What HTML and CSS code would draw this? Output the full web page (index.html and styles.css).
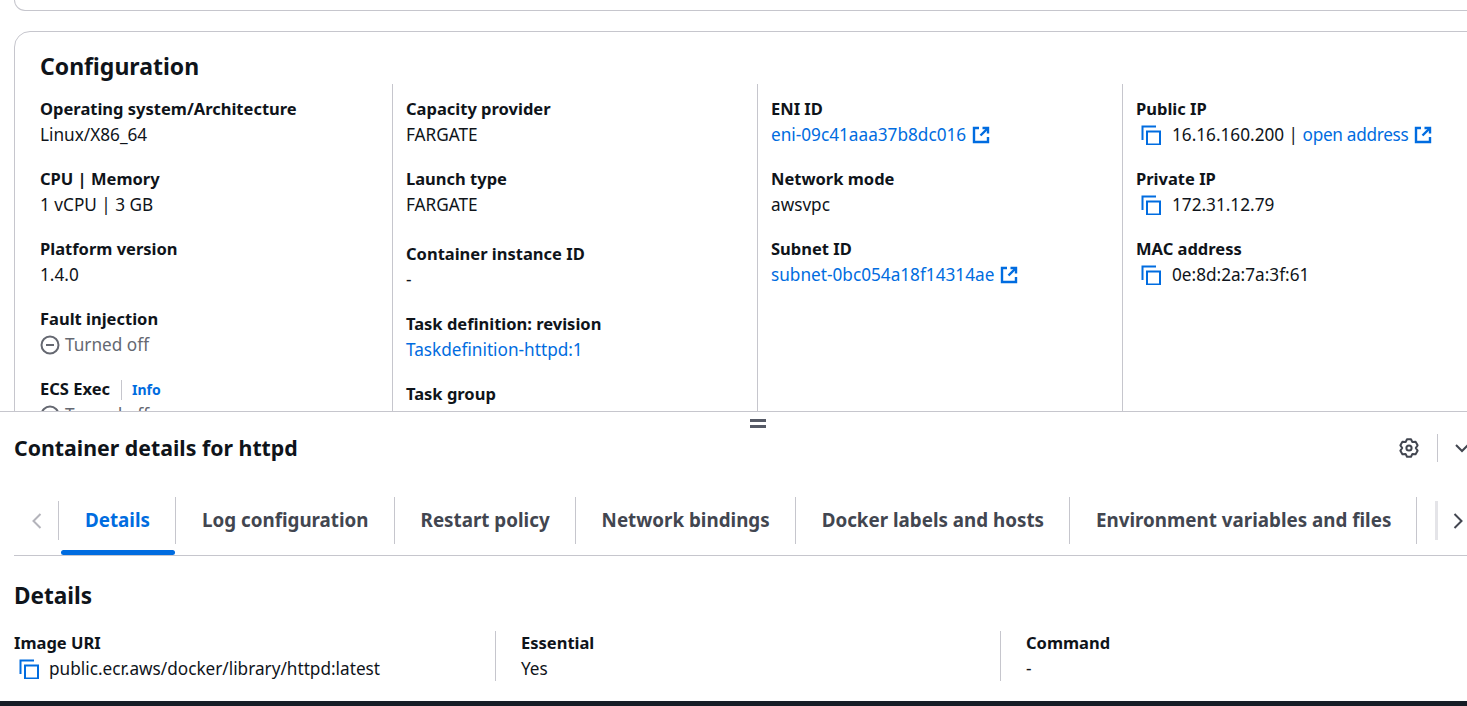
FILE: index.html
```html
<!DOCTYPE html>
<html lang="en">
<head>
  <meta charset="UTF-8">
  <title>Task configuration</title>
  <link rel="stylesheet" href="styles.css">
</head>
<body>
  <svg class="defs" width="0" height="0">
    <symbol id="copy" viewBox="0 0 20 20">
      <path d="M1.500 15V1.500H15" />
      <rect x="6" y="6.500" width="13" height="13" />
    </symbol>
    <symbol id="external" viewBox="0 0 18 18">
      <path d="M7 2H2v14h14v-5" />
      <path d="M10.500 2H16v5.500" />
      <path d="M16 2L8.500 9.500" />
    </symbol>
    <symbol id="off" viewBox="0 0 20 20">
      <circle cx="10" cy="10" r="8.500" />
      <path d="M6 10h8" />
    </symbol>
  </svg>

  <!-- Scrolling task area -->
  <main class="upper">
    <div class="card-end"></div>
    <section class="card">
      <h2 class="card-title">Configuration</h2>
      <div class="columns">
        <div class="column">
          <div class="item"><div class="label">Operating system/Architecture</div><div class="value">Linux/X86_64</div></div>
          <div class="item"><div class="label">CPU | Memory</div><div class="value">1 vCPU | 3 GB</div></div>
          <div class="item"><div class="label">Platform version</div><div class="value">1.4.0</div></div>
          <div class="item"><div class="label">Fault injection</div><div class="value status"><svg class="status-icon"><use href="#off" /></svg>Turned off</div></div>
          <div class="item"><div class="label">ECS Exec<span class="info">Info</span></div><div class="value status"><svg class="status-icon"><use href="#off" /></svg>Turned off</div></div>
        </div>
        <div class="column">
          <div class="item"><div class="label">Capacity provider</div><div class="value">FARGATE</div></div>
          <div class="item tall"><div class="label">Launch type</div><div class="value">FARGATE</div></div>
          <div class="item"><div class="label">Container instance ID</div><div class="value">-</div></div>
          <div class="item"><div class="label">Task definition: revision</div><div class="value"><a href="#">Taskdefinition-httpd:1</a></div></div>
          <div class="item"><div class="label">Task group</div><div class="value">-</div></div>
        </div>
        <div class="column">
          <div class="item"><div class="label">ENI ID</div><div class="value"><a href="#">eni-09c41aaa37b8dc016</a><svg class="icon ext"><use href="#external" /></svg></div></div>
          <div class="item"><div class="label">Network mode</div><div class="value">awsvpc</div></div>
          <div class="item"><div class="label">Subnet ID</div><div class="value"><a href="#">subnet-0bc054a18f14314ae</a><svg class="icon ext"><use href="#external" /></svg></div></div>
        </div>
        <div class="column">
          <div class="item"><div class="label">Public IP</div><div class="value"><svg class="icon copy"><use href="#copy" /></svg>16.16.160.200 | <a class="open-link" href="#">open address</a><svg class="icon ext"><use href="#external" /></svg></div></div>
          <div class="item"><div class="label">Private IP</div><div class="value"><svg class="icon copy"><use href="#copy" /></svg>172.31.12.79</div></div>
          <div class="item"><div class="label">MAC address</div><div class="value"><svg class="icon copy"><use href="#copy" /></svg>0e:8d:2a:7a:3f:61</div></div>
        </div>
      </div>
    </section>
  </main>

  <!-- Split panel -->
  <section class="panel">
    <div class="handle"></div>
    <header class="panel-head">
      <h2 class="panel-title">Container details for httpd</h2>
      <div class="panel-actions">
        <svg class="gear" viewBox="0 0 20 20">
          <path d="M8 1.230h4l1.400 2.880 3.180-.250 2.020 3.510L16.800 10l1.800 2.630-2.020 3.510-3.180-.250L12 18.770H8l-1.400-2.880-3.180.250-2.020-3.510L3.200 10 1.400 7.370l2.020-3.510 3.180.250z" />
          <circle cx="10" cy="10" r="2.600" />
        </svg>
        <span class="action-line"></span>
        <svg class="chevron" viewBox="0 0 16 16"><path d="M2 5l6 6 6-6" /></svg>
      </div>
    </header>

    <nav class="tabs">
      <button class="tab-arrow"><svg class="arrow muted" viewBox="0 0 20 20"><path d="M14.500 3l-7 7 7 7" /></svg></button>
      <a class="tab active" href="#">Details</a>
      <a class="tab" href="#">Log configuration</a>
      <a class="tab" href="#">Restart policy</a>
      <a class="tab" href="#">Network bindings</a>
      <a class="tab" href="#">Docker labels and hosts</a>
      <a class="tab" href="#">Environment variables and files</a>
      <div class="tab-next"><svg class="arrow" viewBox="0 0 20 20"><path d="M5.500 3l7 7-7 7" /></svg></div>
    </nav>

    <h2 class="details-title">Details</h2>
    <div class="details">
      <div class="detail"><div class="label">Image URI</div><div class="value"><svg class="icon copy"><use href="#copy" /></svg>public.ecr.aws/docker/library/httpd:latest</div></div>
      <div class="detail"><div class="label">Essential</div><div class="value">Yes</div></div>
      <div class="detail"><div class="label">Command</div><div class="value">-</div></div>
    </div>
  </section>

  <div class="bottom-bar"></div>
</body>
</html>
```

FILE: styles.css
```css
/* General Styles */
html,
body {
  margin: 0;
  padding: 0;
  height: 706px;
  overflow: hidden;
  background: #fff;
}

body {
  font-family: 'Noto Sans', sans-serif;
  font-size: 17.2px;
  line-height: 22px;
  color: #0f141a;
  display: flex;
  flex-direction: column;
}

a {
  color: #006ce0;
  text-decoration: none;
}

h2 {
  margin: 0;
  font-weight: 700;
}

.defs {
  position: absolute;
}

/* Upper area */
.upper {
  height: 411px;
  flex: none;
  overflow: hidden;
  padding-left: 14px;
}

.card-end {
  width: 1500px;
  height: 10px;
  border: 1px solid #c6c6cd;
  border-top: 0;
  border-radius: 0 0 16px 16px;
}

.card {
  width: 1500px;
  height: 500px;
  margin-top: 20px;
  padding: 19px 0 0 25px;
  border: 1px solid #c6c6cd;
  border-radius: 16px;
}

.card-title {
  font-size: 23px;
  line-height: 30px;
}

.columns {
  display: flex;
  margin-top: 3px;
}

.column {
  width: 351px;
  flex: none;
  padding: 14px 0 0 13px;
  border-left: 1px solid #c6c6cd;
}

.column:first-child {
  width: 352px;
  padding-left: 0;
  border-left: 0;
}

.item {
  margin-bottom: 22px;
}

.item.tall {
  margin-bottom: 27px;
}

.label {
  font-size: 16.5px;
  font-weight: 700;
  margin-bottom: 4px;
}

.value {
  display: flex;
  align-items: center;
  white-space: pre;
}

.open-link {
  letter-spacing: -0.3px;
}

.status {
  color: #656871;
}

.status-icon {
  width: 20px;
  height: 20px;
  flex: none;
  margin-right: 5px;
  fill: none;
  stroke: #656871;
  stroke-width: 2;
}

.info {
  display: inline-block;
  margin-left: 11px;
  padding-left: 10px;
  border-left: 1px solid #c6c6cd;
  font-size: 14px;
  line-height: 20px;
  color: #006ce0;
}

/* Icons */
.icon {
  width: 20px;
  height: 20px;
  flex: none;
  fill: none;
  stroke: #006ce0;
  stroke-width: 2;
}

.copy {
  margin: 0 11px 0 5px;
}

.ext {
  width: 18px;
  height: 18px;
  margin-left: 6px;
  stroke-width: 2.400;
}

/* Split panel */
.panel {
  flex: 1;
  min-height: 0;
  border-top: 1px solid #c6c6cd;
  padding: 0 0 0 14px;
  overflow: hidden;
}

.handle {
  width: 16px;
  height: 9px;
  margin: 7px 0 0 736px;
  border-top: 3px solid #565a66;
  border-bottom: 3px solid #565a66;
  box-sizing: border-box;
}

.panel-head {
  display: flex;
  align-items: center;
  justify-content: space-between;
  height: 28px;
  margin-top: 6px;
}

.panel-title {
  font-size: 21.300px;
  line-height: 28px;
}

.panel-actions {
  display: flex;
  align-items: center;
  width: 68px;
  flex: none;
}

.gear {
  width: 20px;
  height: 20px;
  flex: none;
  fill: none;
  stroke: #424650;
  stroke-width: 2;
  stroke-linejoin: round;
}

.action-line {
  width: 1px;
  height: 28px;
  margin: 0 16px 0 18px;
  background: #c6c6cd;
  flex: none;
}

.chevron {
  width: 16px;
  height: 16px;
  flex: none;
  fill: none;
  stroke: #424650;
  stroke-width: 2;
}

/* Tabs */
.tabs {
  display: flex;
  align-items: stretch;
  height: 58px;
  margin-top: 35px;
  border-bottom: 1px solid #c6c6cd;
  position: relative;
  overflow: hidden;
}

.tab-arrow {
  width: 45px;
  margin: 4px 0 15px;
  padding: 0;
  border: 0;
  border-right: 1px solid #c6c6cd;
  background: none;
  flex: none;
}

.arrow {
  display: block;
  width: 20px;
  height: 20px;
  flex: none;
  fill: none;
  stroke: #424650;
  stroke-width: 2;
}

.arrow.muted {
  margin-left: 12px;
  stroke: #b4b4bb;
}

.tab {
  position: relative;
  display: flex;
  align-items: center;
  padding: 0 25px 2px 26px;
  margin-bottom: 11px;
  font-size: 18.800px;
  font-weight: 700;
  color: #424650;
  white-space: nowrap;
  border-right: 1px solid #c6c6cd;
}

.tab.active {
  color: #006ce0;
}

.tab.active::after {
  content: "";
  position: absolute;
  left: 2px;
  right: 0;
  bottom: -11px;
  height: 5px;
  border-radius: 3px;
  background: #006ce0;
}

.tab-next {
  position: absolute;
  right: 0;
  top: 4px;
  width: 18px;
  height: 39px;
  padding-left: 11px;
  background: #fff;
  border-left: 3px solid #e4e4e8;
  display: flex;
  align-items: center;
}

/* Details */
.details-title {
  font-size: 22.600px;
  line-height: 30px;
  margin-top: 25px;
}

.details {
  display: flex;
  margin-top: 20px;
}

.detail {
  width: 479px;
  flex: none;
  height: 50px;
  padding-left: 25px;
  border-left: 1px solid #c6c6cd;
}

.detail:first-child {
  width: 481px;
  padding-left: 0;
  border-left: 0;
}

.detail .label {
  margin-top: 1px;
}

.detail .copy {
  margin: 0 10px 0 5px;
}

/* Bottom bar */
.bottom-bar {
  height: 5px;
  flex: none;
  background: #161d26;
}
```
